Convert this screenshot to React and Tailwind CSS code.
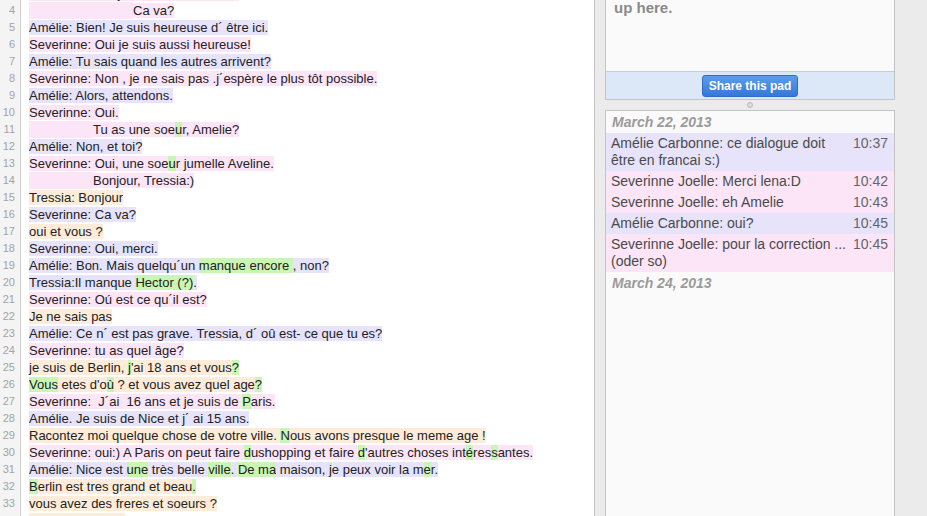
import React from "react";

const bg = {
  p: "bg-[#fbe5f7]",
  u: "bg-[#e6e3fb]",
  o: "bg-[#fdecd9]",
  g: "bg-[#c9f5b5]",
};

// each line: list of [text, author] segments, "tab" segments are indents
const lines = [
  [3, [["Severinne: Bonjour, vous allez bien?", "p"]]],
  [4, [["tab104", "p"], ["Ca va?", "p"]]],
  [5, [["Amélie: Bien! Je suis heureuse d´ être ici.", "u"]]],
  [6, [["Severinne: Oui je suis aussi heureuse!", "p"]]],
  [7, [["Amélie: Tu sais quand les autres arrivent?", "u"]]],
  [8, [["Severinne: Non , je ne sais pas .j´espère le plus tôt possible.", "p"]]],
  [9, [["Amélie: Alors, attendons.", "u"]]],
  [10, [["Severinne: Oui.", "p"]]],
  [11, [["tab64", "p"], ["Tu as une soe", "p"], ["u", "g"], ["r, Amelie?", "p"]]],
  [12, [["Amélie: Non, et toi?", "u"]]],
  [13, [["Severinne: Oui, une soe", "p"], ["u", "g"], ["r jumelle Aveline.", "p"]]],
  [14, [["tab64", "p"], ["Bonjour, Tressia:)", "p"]]],
  [15, [["Tressia: Bonjour", "o"]]],
  [16, [["Severinne: Ca va?", "u"]]],
  [17, [["oui et vous ?", "o"]]],
  [18, [["Severinne: Oui, merci.", "u"]]],
  [19, [["Amélie: Bon. Mais quelqu´un ", "u"], ["manque encore ", "g"], [", non?", "u"]]],
  [20, [["Tressia:Il manque ", "u"], ["Hector (?)", "g"], [".", "u"]]],
  [21, [["Severinne: Oú est ce qu´il est?", "p"]]],
  [22, [["Je ne sais pas", "o"]]],
  [23, [["Amélie: Ce n´ est pas grave. Tressia, d´ oû est- ce que tu es?", "u"]]],
  [24, [["Severinne: tu as quel âge?", "p"]]],
  [25, [["je suis de Berlin, ", "o"], ["j", "g"], ["'ai 18 ans et vous", "o"], ["?", "g"]]],
  [26, [["Vous", "g"], [" etes d'o", "o"], ["ù", "g"], [" ? et vous avez quel age", "o"], ["?", "g"]]],
  [27, [["Severinne:  J´ai  16 ans et je suis de ", "p"], ["P", "g"], ["aris.", "p"]]],
  [28, [["Amélie. Je suis de Nice et j´ ai 15 ans.", "u"]]],
  [29, [["Racontez moi quelque chose de votre ville. ", "o"], ["N", "g"], ["ous avons presque le meme age !", "o"]]],
  [30, [["Severinne: oui:) A Paris on peut faire ", "p"], ["d", "g"], ["ushopping et faire ", "p"], ["d", "g"], ["'autres choses int", "p"], ["é", "g"], ["res", "p"], ["s", "g"], ["antes.", "p"]]],
  [31, [["Amélie: Nice est ", "u"], ["une", "g"], [" très belle ", "u"], ["ville", "g"], [". ", "u"], ["De ma", "g"], [" maison, ", "u"], ["j", "g"], ["e peux voir la m", "u"], ["e", "g"], ["r.", "u"]]],
  [32, [["B", "g"], ["erlin est tres grand et beau", "o"], [".", "g"]]],
  [33, [["vous avez des freres et soeurs ?", "o"]]],
  [34, [["Et vous, Hector?", "o"]]],
];

const chat = [
  { who: "u", text: "Amélie Carbonne: ce dialogue doit être en francai s:)", time: "10:37" },
  { who: "p", text: "Severinne Joelle: Merci lena:D", time: "10:42" },
  { who: "p", text: "Severinne Joelle: eh Amelie", time: "10:43" },
  { who: "u", text: "Amélie Carbonne: oui?", time: "10:45" },
  { who: "p", text: "Severinne Joelle: pour la correction ... (oder so)", time: "10:45" },
];

function Segment({ seg }) {
  const [text, who] = seg;
  if (text === "tab104") return <span className={`inline-block w-[104px] h-[17px] align-top ${bg[who]}`} />;
  if (text === "tab64") return <span className={`inline-block w-[64px] h-[17px] align-top ${bg[who]}`} />;
  return <span className={`${bg[who]} whitespace-pre`}>{text}</span>;
}

export default function App() {
  return (
    <div
      className="flex w-[927px] h-[516px] overflow-hidden bg-[#ebebeb]"
      style={{ fontFamily: '"Liberation Sans", Arial, sans-serif' }}
    >
      {/* editor */}
      <div className="w-[595px] shrink-0 h-full bg-white border-r border-[#c4c4c4] overflow-hidden">
        <div className="-mt-[15px]">
          {lines.map(([n, segs]) => (
            <div key={n} className="flex h-[17px]">
              <div className="w-[21px] shrink-0 bg-[#f4f4f4] border-r border-[#cfcfcf] pr-[5px] text-right text-[11px] leading-[17px] text-[#a3a3a3]">
                {n}
              </div>
              <div className="pl-[8px] text-[13px] leading-[17px] text-[#222] whitespace-nowrap">
                {segs.map((s, i) => (
                  <Segment key={i} seg={s} />
                ))}
              </div>
            </div>
          ))}
        </div>
      </div>

      {/* right column */}
      <div className="ml-[10px] w-[290px] shrink-0 flex flex-col h-full">
        <div className="h-[100px] shrink-0 flex flex-col border-x border-b border-[#c4c4c4] bg-[#fafafa]">
          <div className="flex-1 overflow-hidden pl-[8px]">
            <p className="-mt-[1px] text-[15px] font-bold leading-[18px] text-[#8a8a8a]">up here.</p>
          </div>
          <div className="h-[28px] flex items-center justify-center bg-[#dce8f8] border-t border-[#bccde6]">
            <button className="h-[22px] w-[96px] rounded-[3px] bg-gradient-to-b from-[#5c9de8] to-[#3478da] border border-[#2f6cc8] text-white text-[12px] font-bold leading-none">
              Share this pad
            </button>
          </div>
        </div>

        <div className="h-[10px] shrink-0 flex items-center justify-center">
          <div className="w-[6px] h-[6px] rounded-full border border-[#b9b9b9] bg-[#dcdcdc]" />
        </div>

        <div className="flex-1 border-x border-t border-[#c4c4c4] bg-[#fafafa] text-[14px] leading-[17px]">
          <div className="pl-[6px] h-[22px] flex items-center font-bold italic text-[#9a9a9a]">March 22, 2013</div>
          {chat.map((c, i) => (
            <div key={i} className={`flex justify-between py-[2px] pl-[5px] pr-[6px] text-[#4a4a4a] ${bg[c.who]}`}>
              <span className="w-[245px]">{c.text}</span>
              <span className="text-[#666]">{c.time}</span>
            </div>
          ))}
          <div className="pl-[6px] h-[22px] flex items-center font-bold italic text-[#9a9a9a]">March 24, 2013</div>
        </div>
      </div>
    </div>
  );
}
